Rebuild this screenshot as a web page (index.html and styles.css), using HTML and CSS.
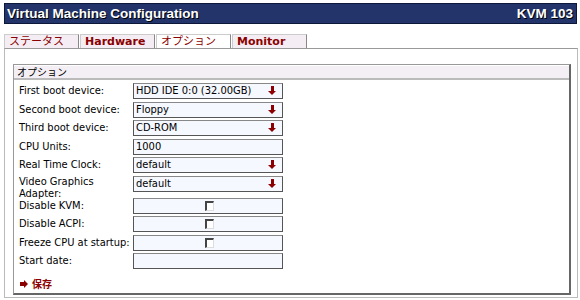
FILE: index.html
```html
<!DOCTYPE html>
<html lang="ja">
<head>
  <meta charset="UTF-8" />
  <title>Virtual Machine Configuration</title>
  <link rel="stylesheet" href="styles.css">
</head>
<body>
  <div class="titlebar">
    <span>Virtual Machine Configuration</span>
    <span>KVM 103</span>
  </div>

  <div class="tabs">
    <div class="tab">ステータス</div>
    <div class="tab bold">Hardware</div>
    <div class="tab active">オプション</div>
    <div class="tab bold">Monitor</div>
  </div>

  <div class="panel">
    <div class="box">
      <div class="legend">オプション</div>
      <div class="rows">
        <label>First boot device:</label>
        <div class="field select">HDD IDE 0:0 (32.00GB)<span class="arrow"></span></div>

        <label>Second boot device:</label>
        <div class="field select">Floppy<span class="arrow"></span></div>

        <label>Third boot device:</label>
        <div class="field select">CD-ROM<span class="arrow"></span></div>

        <label>CPU Units:</label>
        <div class="field">1000</div>

        <label>Real Time Clock:</label>
        <div class="field select">default<span class="arrow"></span></div>

        <label class="wrap">Video Graphics Adapter:</label>
        <div class="field select">default<span class="arrow"></span></div>

        <label>Disable KVM:</label>
        <div class="field check"><span class="checkbox"></span></div>

        <label>Disable ACPI:</label>
        <div class="field check"><span class="checkbox"></span></div>

        <label>Freeze CPU at startup:</label>
        <div class="field check"><span class="checkbox"></span></div>

        <label>Start date:</label>
        <div class="field"></div>
      </div>
      <div class="save"><span class="save-arrow"></span>保存</div>
    </div>
  </div>
</body>
</html>
```

FILE: styles.css
```css
body {
  margin: 0;
  font-family: "DejaVu Sans Condensed", "DejaVu Sans", "Noto Sans CJK JP", sans-serif;
  font-size: 11px;
  color: #000;
  background: #fff;
}
.titlebar {
  margin: 3px 3px 0 4px;
  height: 19px;
  padding: 0 3px 0 2px;
  background: #22346a;
  border: 1px solid #0c173a;
  display: flex;
  justify-content: space-between;
  align-items: center;
  color: #fff;
  font-family: "Liberation Sans", Arial, sans-serif;
  font-weight: bold;
  font-size: 13.5px;
  text-shadow: 1px 1px 0 #000;
}
.tabs {
  display: flex;
  margin: 10px 0 0 4px;
}
.tab {
  width: 69px;
  height: 13px;
  padding-left: 4px;
  line-height: 13px;
  font-family: "DejaVu Sans", "Noto Sans CJK JP", sans-serif;
  font-size: 11px;
  color: #8b0000;
  background: #f4eef4;
  border: 1px solid #ccc;
  border-right-color: #888;
  border-bottom: none;
  margin-right: 1px;
}
.tab.bold {
  font-weight: bold;
}
.tab.active {
  background: #fff;
}
.panel {
  margin: 0 2px 0 4px;
  height: 231px;
  border: 1px solid #bbb;
  border-top-color: #999;
  padding: 15px 6px 2px 8px;
}
.box {
  height: 228px;
  border: 1px solid #999;
  border-right: 2px solid #666;
  border-bottom: 2px solid #666;
}
.legend {
  height: 12px;
  line-height: 12px;
  padding-left: 3px;
  background: #f4eff4;
  border-top: 1px solid #fff;
  border-bottom: 2px solid #bbb;
  font-family: "Noto Sans CJK JP", sans-serif;
  font-size: 10px;
}
.rows {
  display: grid;
  grid-template-columns: 114px 150px;
  row-gap: 2.5px;
  padding: 3px 0 0 5px;
}
.rows label {
  align-self: start;
  line-height: 11px;
  padding-top: 2px;
}
.rows label.wrap {
  padding-top: 0;
  line-height: 12px;
  margin-bottom: -4.5px;
}
.field {
  position: relative;
  height: 14px;
  line-height: 14px;
  padding-left: 2px;
  background: #f5f8ff;
  border: 1px solid #555;
  border-top-color: #888;
}
.arrow {
  position: absolute;
  right: 6px;
  top: 7px;
  width: 0;
  height: 0;
  border-left: 4px solid transparent;
  border-right: 4px solid transparent;
  border-top: 4px solid #8b0000;
}
.arrow::before {
  content: "";
  position: absolute;
  left: -1.5px;
  top: -9px;
  width: 3px;
  height: 5px;
  background: #8b0000;
}
.check {
  display: flex;
  justify-content: center;
  align-items: center;
}
.checkbox {
  width: 6px;
  height: 7px;
  border-top: 2px solid #444;
  border-left: 2px solid #444;
  border-right: 1px solid #ddd;
  border-bottom: 1px solid #ddd;
  background: #fff;
}
.save {
  margin: 7px 0 0 6px;
  color: #8b0000;
  font-weight: bold;
  font-family: "Noto Sans CJK JP", sans-serif;
  font-size: 10px;
  display: flex;
  align-items: center;
  gap: 4px;
}
.save-arrow {
  position: relative;
  width: 4px;
  height: 4px;
  background: #8b0000;
  margin-right: 4px;
}
.save-arrow::after {
  content: "";
  position: absolute;
  left: 4px;
  top: -2px;
  border-top: 4px solid transparent;
  border-bottom: 4px solid transparent;
  border-left: 4px solid #8b0000;
}
```
